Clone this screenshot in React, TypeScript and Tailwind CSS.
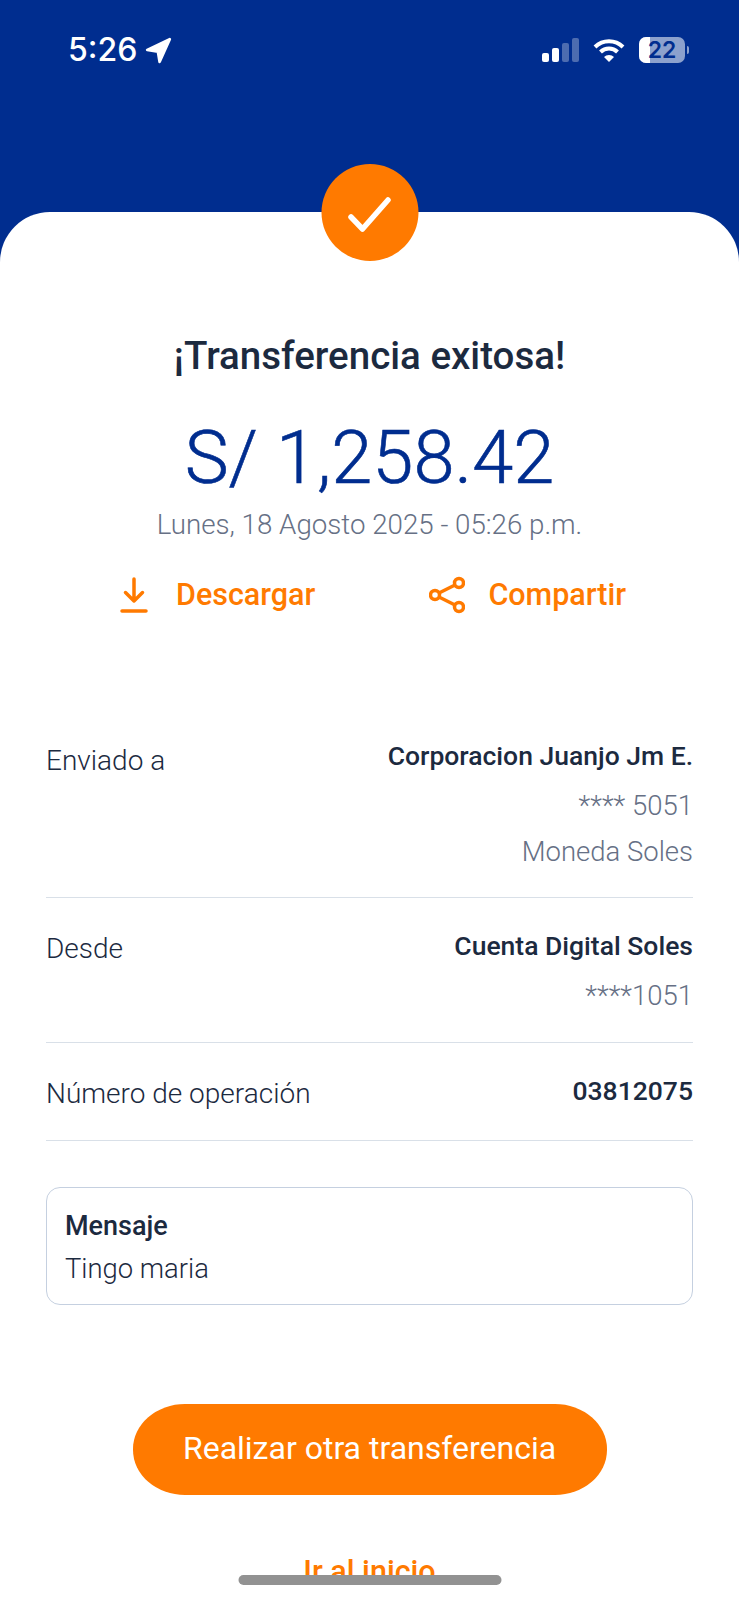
const font = "font-['Roboto','Noto_Sans',sans-serif]";

function StatusBar() {
  return (
    <div className="flex items-center justify-between pl-[68px] pr-[50px] pt-[30px]">
      <div className="flex items-center gap-[8px] text-white">
        <span className="font-['Inter',sans-serif] text-[32px] font-medium leading-[40px]">5:26</span>
        <svg width="27" height="27" viewBox="0 0 24 24" aria-hidden>
          <path d="M22 2 2 11.500l9.500 1.500L13 22z" fill="#fff" stroke="#fff" strokeWidth="2.500" strokeLinejoin="round" />
        </svg>
      </div>
      <div className="flex items-center gap-[14px]">
        <svg width="37" height="24" viewBox="0 0 37 24" aria-hidden>
          <rect x="0" y="15" width="7" height="9" rx="2" fill="#fff" />
          <rect x="10" y="10" width="7" height="14" rx="2" fill="#fff" />
          <rect x="20" y="5" width="7" height="19" rx="2" fill="#fff" fillOpacity=".3" />
          <rect x="30" y="0" width="7" height="24" rx="2" fill="#fff" fillOpacity=".3" />
        </svg>
        <svg width="32" height="24" viewBox="0 0 32 24" fill="none" aria-hidden>
          <path d="M2 9a20 20 0 0 1 28 0M7.500 14a12 12 0 0 1 17 0" stroke="#fff" strokeWidth="4" />
          <path d="M16 24l-5-5a7 7 0 0 1 10 0z" fill="#fff" />
        </svg>
        <div className="flex items-center gap-[2px]">
          <div className="relative h-[26px] w-[46px] rounded-[7px] bg-white/55">
            <div className="h-full w-[11px] rounded-l-[7px] bg-white" />
            <span className="absolute inset-0 flex items-center justify-center font-['Inter',sans-serif] text-[23px] font-semibold leading-none text-[#002d8f]">22</span>
          </div>
          <div className="h-[8px] w-[2px] rounded-r-full bg-white/55" />
        </div>
      </div>
    </div>
  );
}

type RowProps = { label: string; title: string; lines?: string[]; bottom: string; labelTop?: string };

function Row({ label, title, lines, bottom, labelTop = "pt-[3px]" }: RowProps) {
  return (
    <div className={`flex items-start justify-between border-b border-[#d9e0e8] pt-[32px] ${bottom}`}>
      <span className={`${labelTop} text-[28px] font-light leading-[32px] text-[#1c2a3f]`}>{label}</span>
      <div className="text-right">
        <p className="text-[26.500px] font-medium leading-[32px] text-[#1c2a3f]">{title}</p>
        {lines?.map((line, i) => (
          <p key={line} className={`${i === 0 ? "mt-[18px]" : "mt-[14px]"} text-[27.500px] font-light leading-[32px] text-[#667085]`}>{line}</p>
        ))}
      </div>
    </div>
  );
}

export default function App() {
  return (
    <div className={`relative flex h-[1600px] w-[739px] flex-col overflow-hidden bg-[#002d8f] ${font}`}>
      <StatusBar />
      <div className="relative mt-[142px] flex-1 rounded-t-[50px] bg-white px-[46px]">
        <div className="absolute left-1/2 top-[-48px] flex h-[97px] w-[97px] -translate-x-1/2 items-center justify-center rounded-full bg-[#ff7a00]">
          <svg width="96" height="96" viewBox="0 0 96 96" fill="none" stroke="#fff" strokeWidth="5.500" strokeLinecap="round" strokeLinejoin="round" aria-hidden>
            <path d="M29.500 52 41 64l25.500-29" />
          </svg>
        </div>
        <h1 className="pt-[122px] text-center text-[38.500px] font-medium leading-[44px] text-[#1c2a3f]">¡Transferencia exitosa!</h1>
        <p className="mt-[38px] text-center text-[74px] font-light leading-[84px] text-[#002d8f] [-webkit-text-stroke:0.6px_#002d8f]">S/ 1,258.42</p>
        <p className="mt-[9px] text-center text-[27.700px] font-light leading-[32px] text-[#667085]">Lunes, 18 Agosto 2025 - 05:26 p.m.</p>
        <div className="mt-[35px] flex justify-between pl-[74px] pr-[67px] text-[#ff7a00]">
          <div className="flex items-center gap-[28px]">
            <svg width="28" height="38" viewBox="0 0 28 38" fill="none" stroke="currentColor" strokeWidth="3.500" strokeLinecap="round" strokeLinejoin="round" aria-hidden>
              <path d="M14 3v22M5.500 16.500 14 25l8.500-8.500M2 35h24" />
            </svg>
            <span className="text-[30.500px] font-medium leading-[36px]">Descargar</span>
          </div>
          <div className="flex items-center gap-[23px]">
            <svg width="36" height="38" viewBox="0 0 36 38" fill="none" stroke="currentColor" strokeWidth="3.500" aria-hidden>
              <circle cx="6" cy="19" r="4.500" />
              <circle cx="30" cy="7" r="4.500" />
              <circle cx="30" cy="31" r="4.500" />
              <path d="M10 17 26 9M10 21l16 8" />
            </svg>
            <span className="text-[30.500px] font-medium leading-[36px]">Compartir</span>
          </div>
        </div>
        <div className="mt-[94px]">
          <Row label="Enviado a" title="Corporacion Juanjo Jm E." lines={["**** 5051", "Moneda Soles"]} bottom="pb-[29px]" labelTop="pt-[5px]" />
          <Row label="Desde" title="Cuenta Digital Soles" lines={["****1051"]} bottom="pb-[30px]" />
          <Row label="Número de operación" title="03812075" bottom="pb-[30px]" />
        </div>
        <div className="mt-[46px] rounded-[14px] border border-[#c5d0e0] pb-[19px] pl-[18px] pr-[18px] pt-[22px]">
          <p className="text-[27px] font-medium leading-[32px] text-[#1c2a3f]">Mensaje</p>
          <p className="mt-[11px] text-[27.400px] font-light leading-[32px] text-[#1c2a3f]">Tingo maria</p>
        </div>
        <button className="mx-auto mt-[99px] flex h-[91px] w-[474px] items-center justify-center rounded-[52px/45px] bg-[#ff7a00] pb-[4px] text-[32px] font-normal text-white">
          Realizar otra transferencia
        </button>
        <p className="mt-[59px] text-center text-[30.500px] font-medium leading-[36px] text-[#ff7a00]">Ir al inicio</p>
      </div>
      {/* bottom strip cuts the "Ir al inicio" link like the screenshot does */}
      <div className="absolute bottom-0 left-0 h-[25px] w-full bg-white" />
      <div className="absolute bottom-[15px] left-1/2 h-[10px] w-[263px] -translate-x-1/2 rounded-full bg-[#929292]" />
    </div>
  );
}
